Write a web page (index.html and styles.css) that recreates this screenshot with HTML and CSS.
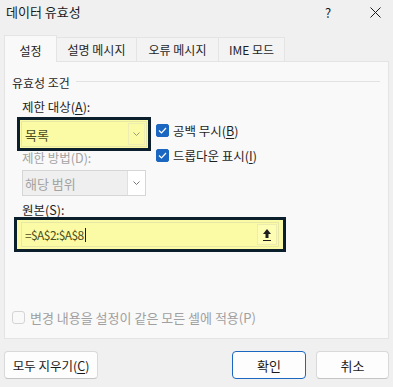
FILE: index.html
```html
<!DOCTYPE html>
<html>
<head>
  <title>데이터 유효성</title>
  <meta charset="UTF-8" />
  <link rel="stylesheet" href="styles.css">
</head>
<body>
  <div class="dialog">
    <div class="titlebar">
      <span class="title">데이터 유효성</span>
      <span class="help">?</span>
      <svg class="close" width="11" height="11" viewBox="0 0 11 11">
        <path d="M0.5 0.5 L10.5 10.5 M10.5 0.5 L0.5 10.5" stroke="#1a1a1a" stroke-width="1" fill="none" />
      </svg>
    </div>

    <!-- Tabs -->
    <div class="tabs">
      <div class="tab active">설정</div>
      <div class="tab t2">설명 메시지</div>
      <div class="tab t3">오류 메시지</div>
      <div class="tab t4">IME 모드</div>
    </div>

    <div class="panel">
      <div class="group-title">
        <span>유효성 조건</span>
        <div class="group-line"></div>
      </div>

      <div class="field-label">제한 대상(<u>A</u>):</div>

      <div class="criteria">
        <div class="combo highlight">
          <span class="combo-text">목록</span>
          <span class="combo-btn">
            <svg width="7" height="4" viewBox="0 0 7 4"><path d="M0.5 0.5 L3.5 3.5 L6.5 0.5" stroke="#9a9a7a" fill="none" /></svg>
          </span>
        </div>

        <div class="checks">
          <label class="check">
            <span class="box on">
              <svg width="9" height="7" viewBox="0 0 9 7"><path d="M1 3.5 L3.5 6 L8 1" stroke="#fff" stroke-width="1.2" fill="none" /></svg>
            </span>
            <span>공백 무시(<u>B</u>)</span>
          </label>
          <label class="check">
            <span class="box on">
              <svg width="9" height="7" viewBox="0 0 9 7"><path d="M1 3.5 L3.5 6 L8 1" stroke="#fff" stroke-width="1.2" fill="none" /></svg>
            </span>
            <span>드롭다운 표시(<u>I</u>)</span>
          </label>
        </div>

        <div class="field-label disabled sub">제한 방법(D):</div>

        <div class="combo off">
          <span class="combo-text">해당 범위</span>
          <span class="combo-btn">
            <svg width="7" height="4" viewBox="0 0 7 4"><path d="M0.5 0.5 L3.5 3.5 L6.5 0.5" stroke="#777" fill="none" /></svg>
          </span>
        </div>
      </div>

      <div class="field-label source-label">원본(<u>S</u>):</div>

      <div class="source highlight-wide">
        <span class="source-text">=$A$2:$A$8</span><span class="caret"></span>
        <span class="ref-btn">
          <svg width="10" height="14" viewBox="0 0 10 14">
            <path d="M5 1 L9 6 L6.5 6 L6.5 10 L3.5 10 L3.5 6 L1 6 Z" fill="#1f1f1f" />
            <rect x="1" y="12" width="8" height="1" fill="#1f1f1f" />
          </svg>
        </span>
      </div>

      <label class="check apply disabled">
        <span class="box"></span>
        <span>변경 내용을 설정이 같은 모든 셀에 적용(P)</span>
      </label>
    </div>

    <div class="footer">
      <button class="btn clear">모두 지우기(<u>C</u>)</button>
      <button class="btn ok">확인</button>
      <button class="btn cancel">취소</button>
    </div>
  </div>
</body>
</html>
```

FILE: styles.css
```css
body {
  margin: 0;
  background: #f0f0f0;
  font-family: "Noto Sans CJK KR", "Noto Sans", sans-serif;
  font-size: 12px;
  color: #1a1a1a;
}

.dialog {
  width: 393px;
  height: 387px;
}

u {
  text-decoration-thickness: 1px;
  text-underline-offset: 2px;
}

/* title bar */
.titlebar {
  height: 24px;
  display: flex;
  align-items: center;
  padding: 0 12px 0 6px;
}

.title {
  flex: 1;
  font-size: 13px;
  line-height: 16px;
}

.help {
  width: 8px;
  font-size: 13px;
  margin-right: 37px;
}

/* tabs */
.tabs {
  margin-top: 11px;
  padding-left: 4px;
  display: flex;
  align-items: flex-end;
  height: 26px;
  position: relative;
  z-index: 1;
}

.tab {
  box-sizing: border-box;
  height: 24px;
  display: flex;
  justify-content: center;
  align-items: center;
  border: 1px solid #e4e4e4;
  border-bottom: none;
  border-left: none;
  background: #f3f3f3;
  color: #1f1f1f;
}

.tab.active {
  height: 27px;
  width: 53px;
  margin-bottom: -1px;
  padding-top: 2px;
  background: #f9f9f9;
  border-left: 1px solid #e4e4e4;
}

.t2 { width: 80px; }
.t3 { width: 82px; }
.t4 { width: 66px; }

/* panel */
.panel {
  box-sizing: border-box;
  margin: 0 4px;
  height: 278px;
  border: 1px solid #e4e4e4;
  background: #f9f9f9;
  padding: 12px 7px 0 7px;
  display: flex;
  flex-direction: column;
}

.group-title {
  height: 16px;
  display: flex;
  align-items: center;
  gap: 6px;
  color: #1f1f1f;
}

.group-line {
  flex: 1;
  height: 1px;
  background: #e2e2e2;
  margin-right: 1px;
  margin-top: -1px;
}

.field-label {
  height: 16px;
  line-height: 16px;
  margin-top: 9px;
  margin-left: 10px;
  color: #1f1f1f;
  font-size: 12.5px;
}

.disabled {
  color: #a3a3a3;
}

.criteria {
  margin-top: 6px;
  margin-left: 9px;
  display: grid;
  grid-template-columns: 126px 1fr;
  column-gap: 9px;
}

.combo {
  box-sizing: border-box;
  height: 26px;
  display: flex;
  align-items: center;
  border: 1px solid #e8e8a6;
  padding: 1px;
}

.combo-text {
  flex: 1;
  padding-left: 2px;
  font-size: 13px;
}

.combo-btn {
  box-sizing: border-box;
  width: 17px;
  height: 22px;
  display: flex;
  justify-content: center;
  align-items: center;
  border: 1px solid #ededb4;
}

/* yellow call-out frames drawn over the controls */
.highlight {
  background: #fbfba6;
  color: #4d4d20;
  box-shadow: 0 0 0 1px #fbfba6, 0 0 0 4px #0c1f2c;
}

.highlight-wide {
  background: #fbfba6;
  color: #4d4d20;
  box-shadow: -2px 0 0 2px #fbfba6, 2px 0 0 2px #fbfba6, -2px 0 0 5px #0c1f2c, 2px 0 0 5px #0c1f2c;
}

.checks {
  grid-row: 1 / span 3;
  grid-column: 2;
  padding-top: 1px;
  display: flex;
  flex-direction: column;
  gap: 9px;
}

.check {
  display: flex;
  align-items: center;
  gap: 4px;
  height: 16px;
  color: #1f1f1f;
  font-size: 12.5px;
}

.box {
  box-sizing: border-box;
  width: 13px;
  height: 13px;
  border-radius: 2px;
  border: 1px solid #c8c8c8;
  background: #f6f6f6;
  display: flex;
  justify-content: center;
  align-items: center;
}

.box.on {
  background: #1a66c1;
  border-color: #1a66c1;
}

.sub {
  grid-column: 1;
  margin-top: 3px;
  margin-left: 1px;
}

.combo.off {
  grid-column: 1;
  margin-top: 4px;
  margin-left: 1px;
  width: 124px;
  background: #efefef;
  border: 1px solid #d6d6d6;
  color: #a3a3a3;
  padding: 0;
}

.combo.off .combo-btn {
  width: 18px;
  height: 24px;
  background: #fff;
  border: none;
  border-left: 1px solid #e0e0e0;
}

.source-label {
  margin-top: 6px;
}

.source {
  box-sizing: border-box;
  margin-top: 4px;
  margin-left: 9px;
  width: 258px;
  height: 25px;
  border: 1px solid #e8e8a6;
  display: flex;
  align-items: center;
  padding: 0 1px 0 3px;
}

.caret {
  width: 1px;
  height: 14px;
  background: #1a1a1a;
  margin-left: 1px;
}

.source-text {
  letter-spacing: -0.6px;
}

.ref-btn {
  box-sizing: border-box;
  margin-left: auto;
  width: 20px;
  height: 21px;
  border: 1px solid #ececb0;
  background: #fdfdb4;
  display: flex;
  justify-content: center;
  align-items: center;
}

.apply {
  margin-top: 62px;
  gap: 5px;
  font-size: 13px;
}

.apply .box {
  border-radius: 3px;
  border-color: #d4d4d4;
  background: #f9f9f9;
}

.apply.disabled {
  color: #a0a0a0;
}

/* bottom buttons */
.footer {
  margin-top: 12px;
  padding: 0 4px;
  display: flex;
  gap: 10px;
}

.btn {
  box-sizing: border-box;
  height: 28px;
  font-family: inherit;
  font-size: 12.5px;
  color: #1a1a1a;
  background: #fdfdfd;
  border: 1px solid #d9d9d9;
  border-bottom-color: #c4c4c4;
  border-radius: 4px;
  padding: 0;
}

.clear {
  width: 94px;
  margin-right: auto;
}

.ok {
  width: 74px;
  font-size: 13px;
  border: 1px solid #1a66c1;
}

.cancel {
  width: 73px;
  font-size: 13px;
}
```
